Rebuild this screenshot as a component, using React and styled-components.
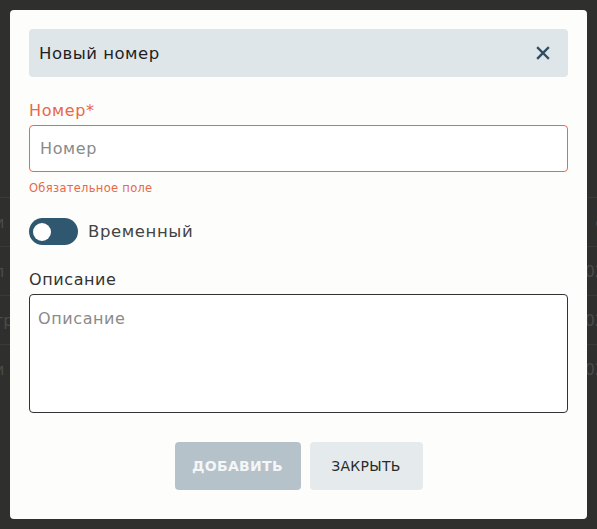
import React from "react"
import styled, { createGlobalStyle } from "styled-components"

const GlobalStyle = createGlobalStyle`
  html, body {
    margin: 0;
    padding: 0;
    background: #2f2f2e;
    font-family: "DejaVu Sans", "Noto Sans", sans-serif;
  }
  * { box-sizing: border-box; }
`

const rows = [
  { left: "и", right: "е" },
  { left: "л", right: "02" },
  { left: "тр", right: "02" },
  { left: "и", right: "02" },
]

const App = () => {
  return (
    <>
      <GlobalStyle />
      <PageBehind>
        <BehindTable>
          {rows.map((r, i) => (
            <BehindRow key={i}>
              <span>{r.left}</span>
              <span>{r.right}</span>
            </BehindRow>
          ))}
        </BehindTable>
      </PageBehind>

      <Overlay>
        <Modal>
          <Header>
            <Title>Новый номер</Title>
            <CloseButton aria-label="close">
              <svg width="14" height="14" viewBox="0 0 14 14">
                <path d="M2 2 L12 12 M12 2 L2 12" stroke="#2f4e63" strokeWidth="2.4" strokeLinecap="square" />
              </svg>
            </CloseButton>
          </Header>

          <Field>
            <Label $error>Номер*</Label>
            <Input placeholder="Номер" $error />
            <ErrorText>Обязательное поле</ErrorText>
          </Field>

          <ToggleRow>
            <Toggle>
              <Knob />
            </Toggle>
            <ToggleLabel>Временный</ToggleLabel>
          </ToggleRow>

          <Field>
            <Label>Описание</Label>
            <TextArea placeholder="Описание" />
          </Field>

          <Actions>
            <Button $variant="primary" $width={126} disabled>Добавить</Button>
            <Button $width={113}>Закрыть</Button>
          </Actions>
        </Modal>
      </Overlay>
    </>
  )
}

export default App

const PageBehind = styled.div`
  width: 100%;
  height: 529px;
  padding-top: 197px;
  overflow: hidden;
`

const BehindTable = styled.div`
  display: flex;
  flex-direction: column;
  margin: 0 -8px 0 -6px;
`

const BehindRow = styled.div`
  display: flex;
  justify-content: space-between;
  align-items: center;
  height: 49px;
  border-top: 1px solid #3a3a39;
  color: #4b4b49;
  font-size: 16px;
`

const Overlay = styled.div`
  position: fixed;
  inset: 0;
  display: flex;
  align-items: center;
  justify-content: center;
`

const Modal = styled.div`
  width: 577px;
  height: 509px;
  background: #fdfdfc;
  border-radius: 4px;
  padding: 19px 19px 29px;
  display: flex;
  flex-direction: column;
`

const Header = styled.div`
  flex: none;
  height: 48px;
  background: #dfe6ea;
  border-radius: 4px;
  display: flex;
  align-items: center;
  justify-content: space-between;
  padding: 0 18px 0 10px;
  margin-bottom: 24px;
`

const Title = styled.h2`
  margin: 0;
  font-size: 16.5px;
  font-weight: 400;
  letter-spacing: 0.5px;
  color: #1f1f1f;
`

const CloseButton = styled.button`
  border: none;
  background: none;
  padding: 0;
  display: flex;
  cursor: pointer;
`

const Field = styled.div`
  display: flex;
  flex-direction: column;
`

const Label = styled.label`
  font-size: 16px;
  letter-spacing: 0.6px;
  color: ${p => (p.$error ? "#e8684a" : "#333")};
  margin-bottom: 5px;
  line-height: 19px;
`

const Input = styled.input`
  height: 47px;
  border: 1px solid ${p => (p.$error ? "#e96a4b" : "#333")};
  border-radius: 4px;
  background: #fff;
  padding: 0 10px;
  font-family: inherit;
  font-size: 16px;
  letter-spacing: 0.6px;
  outline: none;
  &::placeholder { color: #8a8a8a; }
`

const ErrorText = styled.span`
  font-size: 11.5px;
  letter-spacing: 0.3px;
  color: #e8684a;
  margin-top: 9px;
  line-height: 14px;
`

const ToggleRow = styled.div`
  display: flex;
  align-items: center;
  gap: 10px;
  margin-top: 23px;
  margin-bottom: 25px;
`

const Toggle = styled.div`
  width: 49px;
  height: 27px;
  border-radius: 14px;
  background: #2f5870;
  display: flex;
  align-items: center;
  padding-left: 4px;
`

const Knob = styled.div`
  width: 18px;
  height: 18px;
  border-radius: 50%;
  background: #fff;
`

const ToggleLabel = styled.span`
  font-size: 16.5px;
  letter-spacing: 0.6px;
  color: #444;
`

const TextArea = styled.textarea`
  height: 119px;
  border: 1px solid #333;
  border-radius: 4px;
  background: #fff;
  padding: 14px 8px;
  font-family: inherit;
  font-size: 16px;
  letter-spacing: 0.6px;
  resize: none;
  outline: none;
  &::placeholder { color: #8a8a8a; }
`

const Actions = styled.div`
  margin-top: auto;
  display: flex;
  justify-content: center;
  gap: 9px;
`

const Button = styled.button`
  height: 48px;
  width: ${p => p.$width}px;
  padding: 0;
  border: none;
  border-radius: 4px;
  font-family: inherit;
  font-size: 14px;
  letter-spacing: 0.3px;
  text-transform: uppercase;
  font-weight: ${p => (p.$variant === "primary" ? 700 : 500)};
  color: ${p => (p.$variant === "primary" ? "#f4f6f7" : "#2a2a2a")};
  background: ${p => (p.$variant === "primary" ? "#b6c2ca" : "#e5eaed")};
  cursor: pointer;
`
